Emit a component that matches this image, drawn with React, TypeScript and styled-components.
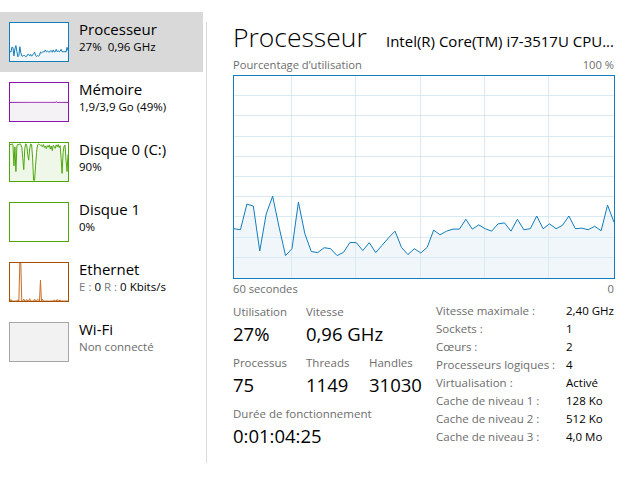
import styled, { createGlobalStyle } from "styled-components";

const GlobalStyle = createGlobalStyle`
  html, body {
    margin: 0;
    padding: 0;
    background: #fff;
  }
  body {
    font-family: "Open Sans", "Noto Sans", sans-serif;
    color: #000;
  }
`;

const cpuData = [
  24.4, 23.9, 36.6, 35.6, 13.4, 31.7, 40.5, 25.2, 11.1, 14.5, 37.6, 21.9, 13.1,
  12.6, 15.0, 14.5, 11.1, 12.7, 17.6, 17.5, 13.6, 17.5, 12.6, 16.2, 19.9, 23.2,
  15.2, 11.6, 14.5, 12.4, 15.2, 23.7, 21.4, 23.2, 24.2, 24.2, 29.1, 24.2, 26.3,
  24.4, 23.2, 26.8, 27.3, 23.2, 29.1, 23.9, 24.4, 30.7, 24.4, 26.8, 24.4, 26.1,
  30.7, 24.4, 24.7, 23.9, 25.6, 23.4, 36.1, 27.6,
];

const memData = Array.from({ length: 60 }, (_, i) => (i === 47 ? 50.5 : 49));

const diskData = [
  97, 95, 98, 96, 40, 90, 25, 92, 97, 95, 98, 96, 88, 60, 30, 85, 98, 94, 70,
  55, 85, 97, 96, 60, 2, 2, 40, 75, 95, 97, 96, 94, 95, 90, 96, 88, 92, 85, 93,
  89, 95, 84, 92, 80, 94, 91, 86, 95, 90, 96, 88, 93, 60, 20, 75, 92, 94, 55,
  25, 70,
];

const netData = [
  0, 4, 0, 0, 0, 0, 0, 0, 3, 0, 100, 100, 0, 0, 5, 0, 0, 4, 0, 0, 6, 0, 0, 0,
  0, 5, 0, 0, 4, 3, 0, 55, 0, 5, 0, 0, 0, 0, 0, 0, 0, 0, 0, 0, 0, 3, 0, 0, 4,
  0, 0, 3, 0, 0, 0, 0, 0, 0, 0, 0,
];

const Window = styled.div`
  display: flex;
  width: 625px;
  height: 479px;
  padding-top: 12px;
  box-sizing: border-box;
  overflow: hidden;
`;

const Sidebar = styled.div`
  width: 203px;
  display: flex;
  flex-direction: column;
`;

const NavItem = styled.div<{ $active?: boolean }>`
  display: flex;
  height: 60px;
  padding: 10px 0 0 9px;
  box-sizing: border-box;
  background: ${(p) => (p.$active ? "#d9d9d9" : "transparent")};
`;

const Thumb = styled.div<{ $border: string; $fill: string }>`
  width: 60px;
  height: 40px;
  flex-shrink: 0;
  box-sizing: border-box;
  border: 1px solid ${(p) => p.$border};
  background: ${(p) => p.$fill};

  svg {
    display: block;
  }
`;

const NavText = styled.div`
  margin-left: 10px;
  display: flex;
  flex-direction: column;
`;

const NavTitle = styled.div`
  font-size: 15px;
  line-height: 20px;
  margin-top: -3px;
`;

const NavSub = styled.div<{ $muted?: boolean }>`
  font-size: 11.5px;
  line-height: 16px;
  color: ${(p) => (p.$muted ? "#6d6d6d" : "#000")};
`;

const Dim = styled.span`
  color: #7a7a7a;
`;

const Divider = styled.div`
  width: 1px;
  margin: 10px 0 16px 3px;
  background: #dadada;
`;

const Main = styled.div`
  flex: 1;
  padding: 7px 11px 0 26px;
  display: flex;
  flex-direction: column;
  min-width: 0;
`;

const Header = styled.div`
  display: flex;
  align-items: baseline;
  white-space: nowrap;
`;

const Title = styled.h1`
  margin: 0;
  font-size: 26.5px;
  line-height: 36px;
  font-weight: 300;
`;

const Model = styled.div`
  margin-left: auto;
  font-size: 15px;
`;

const AxisRow = styled.div<{ $gap?: number }>`
  display: flex;
  justify-content: space-between;
  font-size: 11.2px;
  line-height: 15px;
  color: #6d6d6d;
  margin-top: ${(p) => p.$gap ?? 0}px;
`;

const ChartBox = styled.div`
  width: 382px;
  height: 204px;
  box-sizing: border-box;
  border: 1px solid #117dbb;
  margin-top: 3px;

  svg {
    display: block;
  }
`;

const Stats = styled.div`
  display: flex;
  margin-top: 7px;
`;

const StatGrid = styled.div`
  display: grid;
  grid-template-columns: 73px 63px auto;
  row-gap: 7px;
  width: 203px;
  align-content: start;
`;

const Stat = styled.div<{ $span?: number }>`
  grid-column: span ${(p) => p.$span ?? 1};
  display: flex;
  flex-direction: column;
`;

const StatLabel = styled.div`
  font-size: 11.5px;
  line-height: 18px;
  color: #6d6d6d;
`;

const StatValue = styled.div`
  font-size: 18.5px;
  line-height: 26px;
  white-space: nowrap;
`;

const InfoTable = styled.div`
  display: grid;
  grid-template-columns: 130px auto;
  grid-auto-rows: 18.1px;
  font-size: 11.5px;
  align-items: center;
  margin-top: -2px;
`;

const InfoKey = styled.div`
  color: #6d6d6d;
  white-space: nowrap;
`;

const InfoVal = styled.div`
  white-space: nowrap;
`;

function toPoints(data: number[], w: number, h: number) {
  const step = w / (data.length - 1);
  return data
    .map((v, i) => `${(i * step).toFixed(2)},${(h - (v / 100) * h).toFixed(2)}`)
    .join(" ");
}

function Spark({ data, stroke, fill }: { data: number[]; stroke: string; fill: string }) {
  const w = 58;
  const h = 38;
  const pts = toPoints(data, w, h);
  return (
    <svg width={w} height={h} viewBox={`0 0 ${w} ${h}`}>
      <polygon points={`0,${h} ${pts} ${w},${h}`} fill={fill} />
      <polyline points={pts} fill="none" stroke={stroke} strokeWidth={1} />
    </svg>
  );
}

function CpuChart() {
  const w = 380;
  const h = 202;
  const pts = toPoints(cpuData, w, h);
  const vLines = [0, 1, 2, 3, 4].map((k) => Math.round(58 + 64.3 * k) - 0.5);
  const hLines = Array.from({ length: 9 }, (_, i) => Math.round(((i + 1) * h) / 10) - 0.5);
  return (
    <svg width={w} height={h} viewBox={`0 0 ${w} ${h}`}>
      <polygon points={`0,${h} ${pts} ${w},${h}`} fill="#f1f6fa" />
      {hLines.map((y) => (
        <line key={"h" + y} x1={0} x2={w} y1={y} y2={y} stroke="#d9eaf4" />
      ))}
      {vLines.map((x) => (
        <line key={"v" + x} x1={x} x2={x} y1={0} y2={h} stroke="#d9eaf4" />
      ))}
      <polyline points={pts} fill="none" stroke="#117dbb" strokeWidth={1} />
    </svg>
  );
}

export default function App() {
  return (
    <>
      <GlobalStyle />
      <Window>
        <Sidebar>
          <NavItem $active>
            <Thumb $border="#117dbb" $fill="#fff">
              <Spark data={cpuData} stroke="#117dbb" fill="#f1f6fa" />
            </Thumb>
            <NavText>
              <NavTitle>Processeur</NavTitle>
              <NavSub>27%&nbsp; 0,96 GHz</NavSub>
            </NavText>
          </NavItem>
          <NavItem>
            <Thumb $border="#8b12ae" $fill="#fff">
              <Spark data={memData} stroke="#8b12ae" fill="#f4f2f4" />
            </Thumb>
            <NavText>
              <NavTitle>Mémoire</NavTitle>
              <NavSub>1,9/3,9 Go (49%)</NavSub>
            </NavText>
          </NavItem>
          <NavItem>
            <Thumb $border="#4da60c" $fill="#fff">
              <Spark data={diskData} stroke="#4da60c" fill="#eff7e9" />
            </Thumb>
            <NavText>
              <NavTitle>Disque 0 (C:)</NavTitle>
              <NavSub>90%</NavSub>
            </NavText>
          </NavItem>
          <NavItem>
            <Thumb $border="#4da60c" $fill="#fff" />
            <NavText>
              <NavTitle>Disque 1</NavTitle>
              <NavSub>0%</NavSub>
            </NavText>
          </NavItem>
          <NavItem>
            <Thumb $border="#a74f01" $fill="#fff">
              <Spark data={netData} stroke="#c8702a" fill="#fcf3eb" />
            </Thumb>
            <NavText>
              <NavTitle>Ethernet</NavTitle>
              <NavSub>
                <Dim>E :</Dim> 0 <Dim>R :</Dim> 0 Kbits/s
              </NavSub>
            </NavText>
          </NavItem>
          <NavItem>
            <Thumb $border="#a6a6a6" $fill="#f2f2f2" />
            <NavText>
              <NavTitle>Wi-Fi</NavTitle>
              <NavSub $muted>Non connecté</NavSub>
            </NavText>
          </NavItem>
        </Sidebar>
        <Divider />
        <Main>
          <Header>
            <Title>Processeur</Title>
            <Model>Intel(R) Core(TM) i7-3517U CPU...</Model>
          </Header>
          <AxisRow $gap={2}>
            <span>Pourcentage d’utilisation</span>
            <span>100 %</span>
          </AxisRow>
          <ChartBox>
            <CpuChart />
          </ChartBox>
          <AxisRow $gap={2}>
            <span>60 secondes</span>
            <span>0</span>
          </AxisRow>
          <Stats>
            <StatGrid>
              <Stat>
                <StatLabel>Utilisation</StatLabel>
                <StatValue>27%</StatValue>
              </Stat>
              <Stat $span={2}>
                <StatLabel>Vitesse</StatLabel>
                <StatValue>0,96 GHz</StatValue>
              </Stat>
              <Stat>
                <StatLabel>Processus</StatLabel>
                <StatValue>75</StatValue>
              </Stat>
              <Stat>
                <StatLabel>Threads</StatLabel>
                <StatValue>1149</StatValue>
              </Stat>
              <Stat>
                <StatLabel>Handles</StatLabel>
                <StatValue>31030</StatValue>
              </Stat>
              <Stat $span={3}>
                <StatLabel>Durée de fonctionnement</StatLabel>
                <StatValue>0:01:04:25</StatValue>
              </Stat>
            </StatGrid>
            <InfoTable>
              <InfoKey>Vitesse maximale :</InfoKey>
              <InfoVal>2,40 GHz</InfoVal>
              <InfoKey>Sockets :</InfoKey>
              <InfoVal>1</InfoVal>
              <InfoKey>Cœurs :</InfoKey>
              <InfoVal>2</InfoVal>
              <InfoKey>Processeurs logiques :</InfoKey>
              <InfoVal>4</InfoVal>
              <InfoKey>Virtualisation :</InfoKey>
              <InfoVal>Activé</InfoVal>
              <InfoKey>Cache de niveau 1 :</InfoKey>
              <InfoVal>128 Ko</InfoVal>
              <InfoKey>Cache de niveau 2 :</InfoKey>
              <InfoVal>512 Ko</InfoVal>
              <InfoKey>Cache de niveau 3 :</InfoKey>
              <InfoVal>4,0 Mo</InfoVal>
            </InfoTable>
          </Stats>
        </Main>
      </Window>
    </>
  );
}
